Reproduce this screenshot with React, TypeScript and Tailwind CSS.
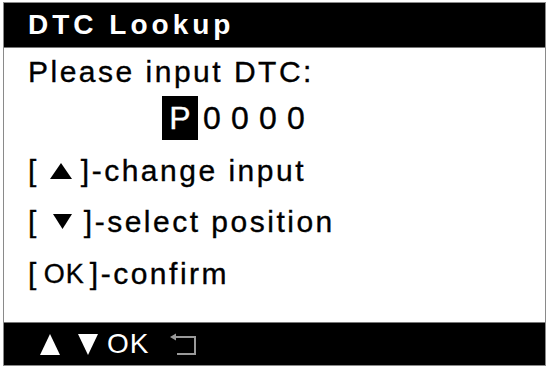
import React from "react";

const font = { fontFamily: '"Liberation Sans", Arial, sans-serif' };

function Up({ w, h, fill }: { w: number; h: number; fill: string }) {
  return (
    <svg width={w} height={h} viewBox={`0 0 ${w} ${h}`} className="block shrink-0">
      <polygon points={`${w / 2},0 ${w},${h} 0,${h}`} fill={fill} />
    </svg>
  );
}

function Down({ w, h, fill }: { w: number; h: number; fill: string }) {
  return (
    <svg width={w} height={h} viewBox={`0 0 ${w} ${h}`} className="block shrink-0">
      <polygon points={`0,0 ${w},0 ${w / 2},${h}`} fill={fill} />
    </svg>
  );
}

export default function App() {
  return (
    <div className="w-[550px] h-[368px] bg-white pl-[3px] pt-[2px]" style={font}>
      <div className="w-[543px] h-[364px] border border-[#8a8a8a] flex flex-col">
        <div className="h-[45px] bg-black border-b border-[#777] flex items-center pl-[24px]">
          <span className="text-white font-bold text-[28px] leading-none tracking-[4px]">DTC Lookup</span>
        </div>
        <div className="flex-1 flex flex-col pl-[24px] text-black [-webkit-text-stroke:0.35px_#000]">
          <div className="h-[48px] flex items-center text-[30px] leading-none tracking-[2.5px]">Please input DTC:</div>
          <div className="h-[44px] flex items-stretch pl-[134px] text-[32px] leading-none">
            <div className="w-[36px] bg-black text-white [-webkit-text-stroke:0.35px_#fff] flex items-center justify-center">P</div>
            {["0", "0", "0", "0"].map((d, i) => (
              <div key={i} className="w-[28px] flex items-center justify-center">{d}</div>
            ))}
          </div>
          <div className="mt-[6px] h-[50px] flex items-center text-[30px] leading-none tracking-[2.5px]">
            <span>[</span>
            <span className="ml-[11px]"><Up w={22} h={16} fill="#000" /></span>
            <span className="ml-[9px]">]-change input</span>
          </div>
          <div className="h-[51px] flex items-center text-[30px] leading-none tracking-[2.5px]">
            <span>[</span>
            <span className="ml-[14px]"><Down w={19} h={15} fill="#000" /></span>
            <span className="ml-[12px]">]-select position</span>
          </div>
          <div className="h-[54px] flex items-center text-[30px] leading-none tracking-[2.5px]">
            <span>[</span>
            <span className="ml-[5px] text-[27px] tracking-[1px]">OK</span>
            <span className="ml-[5px]">]-confirm</span>
          </div>
        </div>
        <div className="h-[43px] bg-black border-t border-[#777] flex items-center pl-[36px]">
          <Up w={20} h={21} fill="#fff" />
          <span className="ml-[18px]"><Down w={20} h={21} fill="#fff" /></span>
          <span className="ml-[9px] text-white text-[28px] leading-none tracking-[1px]">OK</span>
          <span className="ml-[19px]">
            <svg width="30" height="24" viewBox="0 0 30 24" className="block">
              <polygon points="2,5 8,1.5 8,8.5" fill="#9a9a9a" />
              <polyline points="7,5 27,5 27,22 9,22" fill="none" stroke="#9a9a9a" strokeWidth="2" />
            </svg>
          </span>
        </div>
      </div>
    </div>
  );
}
